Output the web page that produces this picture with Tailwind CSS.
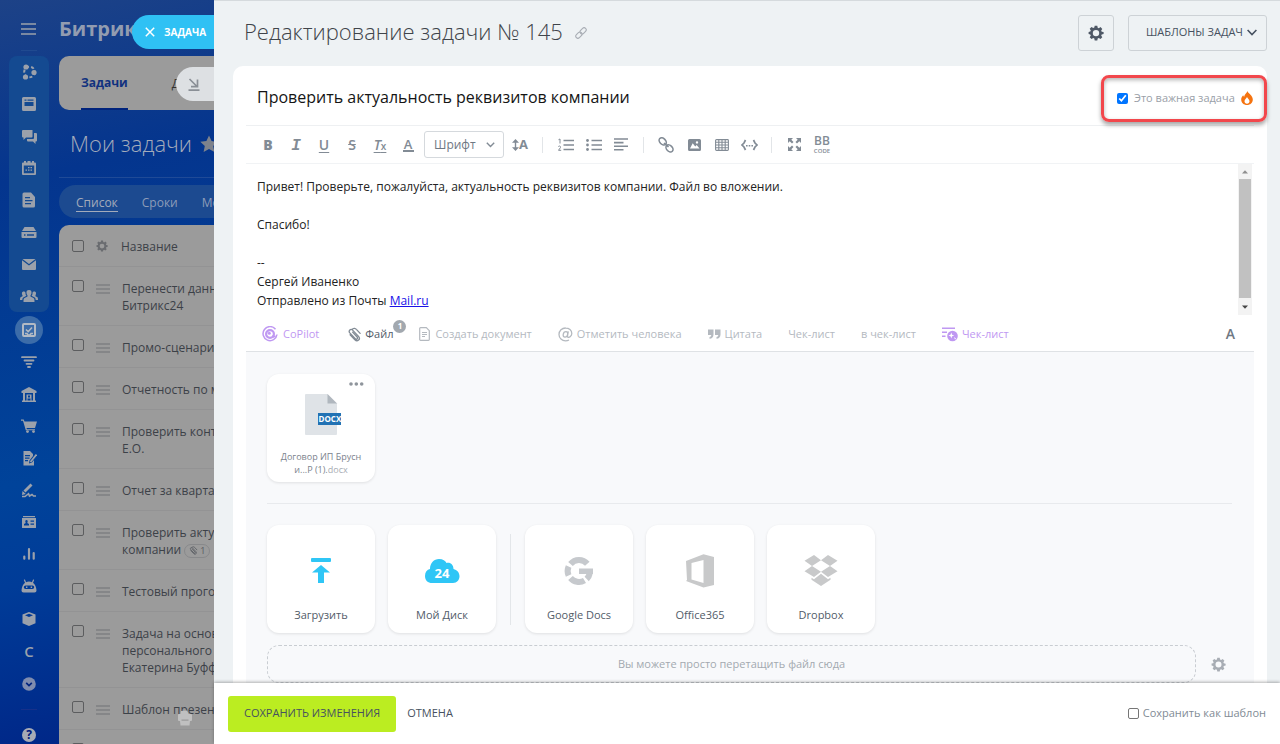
<!DOCTYPE html>
<html lang="ru">
<head>
<meta charset="utf-8">
<meta name="viewport" content="width=device-width, initial-scale=1">
<title>Редактирование задачи № 145</title>
<script src="https://cdn.jsdelivr.net/npm/@tailwindcss/browser@4"></script>
</head>
<body class="font-['Open_Sans','Noto_Sans',sans-serif] text-[#525c69]">
<svg class="hidden" aria-hidden="true">
  <symbol id="gear" viewBox="0 0 16 16"><path fill-rule="evenodd" fill="currentColor" d="M6.700 0.800h2.600l.4 1.900 1.100.5 1.700-1.100 1.800 1.800-1.100 1.700.5 1.100 1.900.4v2l-1.900.4-.5 1.100 1.100 1.700-1.800 1.800-1.700-1.100-1.100.5-.4 1.900H6.700l-.4-1.900-1.100-.5-1.700 1.100-1.800-1.800 1.100-1.700-.5-1.100L.6 9V7l1.700-.4.5-1.100-1.100-1.700 1.800-1.800 1.700 1.100 1.100-.5zM8 4.900a3.200 3.200 0 1 0 0 6.400a3.200 3.200 0 1 0 0-6.400z"/></symbol>
  <symbol id="grip" viewBox="0 0 14 10"><path stroke="#7f8083" stroke-width="1.300" d="M0 1h14M0 5h14M0 9h14"/></symbol>
  <symbol id="clip" viewBox="0 0 16 16"><path fill="none" stroke="currentColor" stroke-width="1.400" stroke-linecap="round" d="M6 5.500l4.800 5.200c1.300 1.500-.7 3.200-2 1.800L3 6.300C1.200 4.200 3.800 1.300 6 3.300l6.300 6.700c2.600 3-1.200 6.300-3.900 3.600L3.300 8.200M5.200 2.700C7 .4 9.200 1.600 10 2.500l4 4.300"/></symbol>
</svg>
<div class="flex h-screen overflow-hidden bg-[linear-gradient(168deg,#1d4287_0%,#04358e_18%,#00439a_48%,#003c98_58%,#001177_92%)]">

  <nav class="flex w-[59px] shrink-0 flex-col items-center pr-px text-[#9ba1ab]" aria-label="Главное меню">
    <button class="flex h-[50px] w-full shrink-0 items-center justify-center pt-2" aria-label="Меню"><svg class="h-3 w-4" viewBox="0 0 16 12"><path stroke="currentColor" stroke-width="1.300" d="M0 1h15M0 6h15M0 11h15"/></svg></button>
    <div class="mb-[5px] h-px w-4 shrink-0 bg-[#204a90]"></div>
    <div class="flex w-10 shrink-0 flex-col rounded-lg bg-[#144a91]">
      <a href="#" class="flex h-8 items-center justify-center" aria-label="Совместная работа"><svg class="h-4 w-4" viewBox="0 0 16 16"><circle cx="8.500" cy="8" r="5.300" fill="none" stroke="currentColor" stroke-width="2" stroke-dasharray="3 2.200"/><circle cx="5" cy="3" r="2.600" fill="currentColor"/><circle cx="13" cy="8.500" r="2.600" fill="currentColor"/><circle cx="4.500" cy="13" r="2.600" fill="currentColor"/></svg></a>
      <a href="#" class="flex h-8 items-center justify-center" aria-label="Лента"><svg class="h-[14px] w-[14px]" viewBox="0 0 14 14"><path fill="currentColor" fill-rule="evenodd" d="M1.500 0h11A1.500 1.500 0 0 1 14 1.500v11a1.500 1.500 0 0 1-1.500 1.500h-11A1.500 1.500 0 0 1 0 12.500v-11A1.500 1.500 0 0 1 1.500 0zM2.500 2.500v1.200h2V2.500zM5.500 2.500v1.200h6V2.500zM2.500 5v4h9V5z"/></svg></a>
      <a href="#" class="flex h-8 items-center justify-center" aria-label="Чаты"><svg class="h-[15px] w-[15px]" viewBox="0 0 15 15"><path fill="currentColor" d="M1 1h9.500v6.500a1 1 0 0 1-1 1H4L1.500 11V8.500H1a1 1 0 0 1-1-1V2a1 1 0 0 1 1-1zM12 4h2a1 1 0 0 1 1 1v6.500a1 1 0 0 1-1 1h-.5V15L11 12.500H6a1 1 0 0 1-1-1V10h6a1 1 0 0 0 1-1z"/></svg></a>
      <a href="#" class="flex h-8 items-center justify-center" aria-label="Календарь"><svg class="h-4 w-4" viewBox="0 0 16 16"><path fill="currentColor" fill-rule="evenodd" d="M3 1h2v1.500h1.500V1h3v1.500H11V1h2v1.500h1a1 1 0 0 1 1 1V14a1 1 0 0 1-1 1H2a1 1 0 0 1-1-1V3.500a1 1 0 0 1 1-1h1zM2.800 5.500v7.700h10.400V5.500zM7 7h1.500v1.300H7zM9.500 7H11v1.300H9.500zM4.500 9.500H6v1.300H4.500zM7 9.500h1.500v1.300H7zM9.500 9.500H11v1.300H9.500z"/></svg></a>
      <a href="#" class="flex h-8 items-center justify-center" aria-label="Документы"><svg class="h-4 w-[14px]" viewBox="0 0 14 16"><path fill="currentColor" fill-rule="evenodd" d="M2 .5h7L13 5v9a1.500 1.500 0 0 1-1.500 1.500H2A1.500 1.500 0 0 1 .5 14V2A1.500 1.500 0 0 1 2 .5zM3 5v1.300h5V5zM3 8v1.300h7.500V8zM3 11v1.300h6V11z"/></svg></a>
      <a href="#" class="flex h-8 items-center justify-center" aria-label="Диск"><svg class="h-[11px] w-4" viewBox="0 0 16 11"><path fill="currentColor" fill-rule="evenodd" d="M3.500 0h9l2.500 4H1zM.5 5h15v5a1 1 0 0 1-1 1h-13a1 1 0 0 1-1-1zM3 7.300v1.400h1.500V7.300zM6 7.300v1.400h7V7.300z"/></svg></a>
      <a href="#" class="flex h-8 items-center justify-center" aria-label="Почта"><svg class="h-[11px] w-[14px]" viewBox="0 0 14 11"><path fill="currentColor" d="M.5 0h13L7 5zM0 1.200l7 5.300 7-5.300V10a1 1 0 0 1-1 1H1a1 1 0 0 1-1-1z"/></svg></a>
      <a href="#" class="flex h-8 items-center justify-center" aria-label="Группы"><svg class="h-3 w-[18px]" viewBox="0 0 18 12"><path fill="currentColor" d="M9 0c2 0 2.700 1.300 2.500 3-.1 1.300-.7 2-1 2.600v1l3 1.400c.8.400 1 1.200 1 4h-11c0-2.800.2-3.600 1-4l3-1.400v-1c-.3-.6-.9-1.300-1-2.600C6.300 1.300 7 0 9 0zM3.800 1.500c1 0 1.600.5 1.700 1.500 0 1.500.3 2 1 2.800L3.300 7.500C2.500 8 2.400 9 2.300 10H0c0-2 .2-2.600 1-3l1.500-.8v-1C1.700 4 1.500 1.500 3.800 1.500zM14.200 1.500c-1 0-1.600.5-1.700 1.500 0 1.500-.3 2-1 2.800l3.200 1.700c.8.500.9 1.500 1 2.500H18c0-2-.2-2.600-1-3l-1.500-.8v-1C16.300 4 16.500 1.500 14.200 1.500z"/></svg></a>
    </div>
    <a href="#" class="mt-1 flex h-7 w-7 shrink-0 items-center justify-center rounded-full bg-[#3c6ca9] text-[#b3bac4]" aria-label="Задачи"><svg class="h-[14px] w-[14px]" viewBox="0 0 14 14"><rect x="1" y="1" width="12" height="12" rx="1" fill="none" stroke="currentColor" stroke-width="2"/><path d="M4 6.500l2.200 2.200L10 4.500M3 10.500h2l1 1.500h2l1-1.500h2" fill="none" stroke="currentColor" stroke-width="1.600"/></svg></a>
    <a href="#" class="mt-[2px] flex h-8 w-8 shrink-0 items-center justify-center" aria-label="CRM"><svg class="h-3 w-4" viewBox="0 0 16 12"><path stroke="currentColor" stroke-width="1.800" d="M1 1.200h14M3.500 4.500h9M5.500 7.800h5M7 11h2" stroke-linecap="round"/></svg></a>
    <a href="#" class="flex h-8 w-8 shrink-0 items-center justify-center" aria-label="Компания"><svg class="h-[15px] w-4" viewBox="0 0 16 15"><path fill="currentColor" fill-rule="evenodd" d="M8 0l7.500 4v2H14v7.500h1V15H1v-1.500h1V6H.5V4zM4 6v7.500h1.500V7.500h5v6H12V6zM7 8.500v2h2v-2zM6.500 11.500v2h3v-2z"/></svg></a>
    <a href="#" class="flex h-8 w-8 shrink-0 items-center justify-center" aria-label="Магазин"><svg class="h-[14px] w-4" viewBox="0 0 16 14"><path fill="currentColor" d="M0 .5h2.700l.8 2H16L14 9H5.500l.4 1.200H14v1H4.800L2 1.700H0z"/><circle cx="6.500" cy="12.600" r="1.400" fill="currentColor"/><circle cx="12.500" cy="12.600" r="1.400" fill="currentColor"/></svg></a>
    <a href="#" class="flex h-8 w-8 shrink-0 items-center justify-center" aria-label="Отчёты"><svg class="h-[15px] w-[15px]" viewBox="0 0 15 15"><path fill="currentColor" fill-rule="evenodd" d="M1.500 0H8l3 3v2L7.500 9.500 7 12.500 10 11.500 12 9v5.500H1.500zM3 4v1.200h5V4zM3 6.500v1.200h4.500V6.500zM3 9v1.200h3V9z"/><path stroke="currentColor" stroke-width="1.800" d="M14.500 3.500L8.500 11"/></svg></a>
    <a href="#" class="flex h-8 w-8 shrink-0 items-center justify-center" aria-label="Подпись"><svg class="h-[15px] w-4" viewBox="0 0 16 15"><path stroke="currentColor" stroke-width="2.800" d="M10.500 1.500L3.500 8.500"/><path fill="currentColor" d="M1.500 8L4.800 11 1 12z"/><path fill="none" stroke="currentColor" stroke-width="1.600" d="M1 13.500h3l3.500-2.800 1 2.300 2.500-1.500 1.500 1.500H15"/></svg></a>
    <a href="#" class="flex h-8 w-8 shrink-0 items-center justify-center" aria-label="Контакты"><svg class="h-3 w-4" viewBox="0 0 16 12"><path fill="currentColor" fill-rule="evenodd" d="M2 0h12v1.200H2zM1 2h14v9.500a.5.5 0 0 1-.5.5h-13a.5.5 0 0 1-.5-.5zM5.500 4C4 4 4 6 4.800 7L3 8v1.500h5V8L6.200 7C7 6 7 4 5.500 4zM9.500 4.500v1.300H13V4.500zM9.500 7.500v1.300H13V7.500z"/></svg></a>
    <a href="#" class="flex h-8 w-8 shrink-0 items-center justify-center" aria-label="Аналитика"><svg class="h-3 w-3" viewBox="0 0 12 12"><path stroke="currentColor" stroke-width="2.200" stroke-linecap="round" d="M1.300 10.700V8.500M6 10.700V1.200M10.700 10.700V5"/></svg></a>
    <a href="#" class="flex h-8 w-8 shrink-0 items-center justify-center" aria-label="Роботы"><svg class="h-[14px] w-4" viewBox="0 0 16 14"><path stroke="currentColor" stroke-width="1.200" stroke-linecap="round" d="M3.500 1l1 2.500M12.500 1l-1 2.500"/><path fill="currentColor" fill-rule="evenodd" d="M8 2.500c4.500 0 7 3.500 7.500 9a2 2 0 0 1-2 2h-11a2 2 0 0 1-2-2C1 6 3.500 2.500 8 2.500zM4.500 6.500a1.700 1.700 0 0 0 0 3.400h7a1.700 1.700 0 0 0 0-3.400z"/><path stroke="currentColor" stroke-width="1.400" d="M5 8.200h1.400M9.700 8.200h1.400"/></svg></a>
    <a href="#" class="mt-px flex h-8 w-8 shrink-0 items-center justify-center" aria-label="Маркет"><svg class="h-[14px] w-[14px]" viewBox="0 0 14 14"><path fill="currentColor" fill-rule="evenodd" d="M7 0l6.500 2.500v8.700L7 14 .5 11.200V2.500zM7 1.800L3 3.300l4 1.600 4-1.600z"/></svg></a>
    <a href="#" class="flex h-8 w-8 shrink-0 items-center justify-center text-[15px] font-semibold" aria-label="С">С</a>
    <button class="mt-px flex h-8 w-8 shrink-0 items-center justify-center text-[#7f8cae]" aria-label="Ещё"><svg class="h-[14px] w-[14px]" viewBox="0 0 14 14"><circle cx="7" cy="7" r="6.800" fill="currentColor"/><path d="M4.200 5.800L7 8.500l2.800-2.700" fill="none" stroke="#00237f" stroke-width="1.700"/></svg></button>
    <div class="mt-[9px] h-px w-4 shrink-0 bg-[#16308a]"></div>
    <button class="mt-[9px] flex h-8 w-8 shrink-0 items-center justify-center" aria-label="Помощь"><span class="flex h-[14px] w-[14px] items-center justify-center rounded-full bg-[#a7abb5] text-xs leading-none font-bold text-[#00187a]">?</span></button>
  </nav>

  <section class="relative w-[155px] shrink-0 overflow-hidden whitespace-nowrap" aria-label="Мои задачи">
    <div class="flex h-14 items-center pt-0.5 text-xl font-bold text-[#929cb0]">Битрикс24</div>
    <div class="flex h-[54px] w-[400px] gap-[44px] rounded-l-[10px] bg-[#9b9b9b] pl-[22px] text-xs">
      <a href="#" class="flex items-center border-b-2 border-[#00237c] pt-0.5 font-bold text-[#11317f]">Задачи</a>
      <a href="#" class="flex items-center pt-0.5 text-[#333]">Документы</a>
    </div>
    <div class="flex h-[68px] w-[300px] items-center gap-2 border-b border-[#1f4a97] pl-[11px]">
      <h2 class="text-[22px] font-light text-[#a3abbb]">Мои задачи</h2>
      <svg class="h-[18px] w-[18px] text-[#7d828c]" viewBox="0 0 18 18"><path fill="currentColor" d="M9 .5l2.600 5.600 6.100.7-4.500 4.200 1.200 6L9 14l-5.400 3 1.200-6L.3 6.800l6.100-.7z"/></svg>
    </div>
    <div class="mt-[7px] flex h-[33px] w-[300px] items-center gap-6 rounded-l-full bg-[#1c4a90] pt-0.5 pl-[17px] text-xs text-[#8d9cb8]">
      <a href="#" class="border-b border-[#a3abbb] pt-px font-medium text-[#a3abbb]">Список</a>
      <a href="#">Сроки</a>
      <a href="#">Мой план</a>
    </div>
    <table class="mt-[7px] block w-[340px] rounded-tl-[10px] bg-[#9b9b9b] text-xs leading-[17px] text-[#3c4148]">
      <tbody id="tasks" class="block">
        <tr class="flex h-[42px] items-center border-b border-[#939394] pt-px">
          <th class="flex w-[62px] items-center gap-3 pl-[13px]"><input type="checkbox" aria-label="Выбрать все" class="h-3 w-3 appearance-none rounded-[2px] border border-[#5c5d5f]"><svg class="h-3 w-3 text-[#6a6c70]"><use href="#gear"/></svg></th>
          <th class="font-normal">Название</th>
        </tr>
      </tbody>
    </table>
    <svg class="absolute top-[710px] left-[118px] h-4 w-4 text-[#c0c0c0]" viewBox="0 0 16 16"><path fill="currentColor" fill-rule="evenodd" d="M4 1l6-.500L11.500 4h2.500a1 1 0 0 1 1 1v5a1 1 0 0 1-1 1h-1l-.5 4.500h-9L3 11H2a1 1 0 0 1-1-1V5a1 1 0 0 1 1-1h1.500zM4.500 9.500v1.300h7V9.500z"/></svg>
    <button class="absolute top-[15px] right-0 flex h-[34px] w-[82px] items-center gap-[9px] rounded-l-full bg-[#2fc1f4] pl-[13px] text-[10px] font-bold text-white"><svg class="h-[10px] w-[10px]" viewBox="0 0 10 10"><path stroke="currentColor" stroke-width="1.500" d="M.8.8l8.400 8.400M9.200.8L.8 9.200"/></svg>ЗАДАЧА</button>
    <button class="absolute top-[67px] right-0 flex h-[34px] w-[38px] items-center rounded-l-full bg-[#dde0e3] pl-3 text-[#8a8f96]" aria-label="Свернуть"><svg class="h-[13px] w-3" viewBox="0 0 12 13"><path fill="none" stroke="currentColor" stroke-width="1.700" d="M1.500 1l7.500 7.500M9.500 1.500v7.200H3M.5 12.200h11"/></svg></button>
  </section>

  <main class="z-10 flex min-w-0 flex-1 flex-col border-t border-[#d5dadd] bg-[#eef2f4]">
    <header class="flex h-[65px] shrink-0 items-center pr-[13px] pb-0.5 pl-[30px]">
      <h1 class="pb-0.5 text-[22px] font-light text-[#3f444a]">Редактирование задачи № 145</h1>
      <a href="#" class="ml-3 text-[#a8adb4]" aria-label="Скопировать ссылку"><svg class="h-3 w-3" viewBox="0 0 12 12"><g fill="none" stroke="currentColor" stroke-width="1.100"><rect x="4.600" y="1.700" width="7" height="4.200" rx="2.100" transform="rotate(-45 8.100 3.800)"/><rect x=".4" y="6.100" width="7" height="4.200" rx="2.100" transform="rotate(-45 3.900 8.200)"/></g></svg></a>
      <button class="mr-[14px] ml-auto flex h-9 w-9 items-center justify-center rounded-[3px] border border-[#cdd2d6] text-[#4e5866]" aria-label="Настройки"><svg class="h-4 w-4"><use href="#gear"/></svg></button>
      <button class="flex h-9 items-center gap-1 rounded-[3px] border border-[#cdd2d6] pr-[9px] pl-[17px] text-[11px] font-medium text-[#465160]">ШАБЛОНЫ ЗАДАЧ<svg class="h-[7px] w-[10px]" viewBox="0 0 10 7"><path fill="none" stroke="currentColor" stroke-width="1.600" d="M.6 1L5 5.500 9.400 1"/></svg></button>
    </header>

    <div class="mr-[13px] ml-[19px] flex min-h-0 flex-1 flex-col overflow-hidden rounded-t-[10px] bg-white px-[13px]">
      <div class="flex h-[60px] shrink-0 items-center border-b border-[#eef0f2] pt-0.5 pr-[13px] pl-[11px]">
        <input type="text" aria-label="Название задачи" value="Проверить актуальность реквизитов компании" class="min-w-0 flex-1 text-base text-[#151515] outline-none">
      </div>
      <div class="flex h-[38px] shrink-0 items-center border-b border-[#f1f3f5] pl-2 text-[#828b95]" role="toolbar" aria-label="Форматирование">
        <button class="w-7 text-sm font-extrabold">B</button>
        <button class="w-7 pt-0.5 font-['Liberation_Mono',monospace] text-base font-bold italic">I</button>
        <button class="w-7 text-sm font-semibold underline underline-offset-2">U</button>
        <button class="w-7 text-sm font-semibold line-through">S</button>
        <button class="w-7 text-sm font-semibold italic underline underline-offset-2">T<span class="text-[10px] not-italic">x</span></button>
        <button class="flex w-7 justify-center" aria-label="Цвет текста"><span class="h-[15px] w-[11px] border-b-2 text-[13px] leading-[14px] font-semibold">A</span></button>
        <div class="relative ml-0.5 shrink-0">
          <select aria-label="Шрифт" class="h-[27px] w-20 appearance-none rounded-[3px] border border-[#d5d9dd] pl-[9px] text-xs text-[#6f7883]"><option>Шрифт</option></select>
          <svg class="pointer-events-none absolute top-[11px] right-[9px] h-[6px] w-[9px]" viewBox="0 0 9 6"><path fill="none" stroke="currentColor" stroke-width="1.400" d="M.8.8l3.700 3.700L8.200.8"/></svg>
        </div>
        <button class="flex w-8 items-center justify-center text-[13px] font-bold" aria-label="Размер шрифта"><svg class="h-3 w-[7px]" viewBox="0 0 7 12"><path fill="currentColor" d="M3.500 0L7 3.800H4.200v4.400H7L3.500 12 0 8.200h2.800V3.800H0z"/></svg>A</button>
        <div class="mr-[9px] ml-[6px] h-4 w-px bg-[#e2e5e8]"></div>
        <button class="flex w-7 justify-center" aria-label="Нумерованный список"><svg class="h-[14px] w-4" viewBox="0 0 16 14"><path stroke="currentColor" stroke-width="1.700" d="M5.500 2.500H16M5.500 7H16M5.500 11.500H16"/><path fill="none" stroke="currentColor" d="M.5 1.700l1.500-.7v4.500M.3 8.600c1-1.200 2.800-.3 2.200.9L.5 12.300h2.700"/></svg></button>
        <button class="flex w-[27px] justify-center" aria-label="Список"><svg class="h-3 w-4" viewBox="0 0 16 12"><path stroke="currentColor" stroke-width="1.700" d="M5.500 1.500H16M5.500 6H16M5.500 10.500H16"/><g fill="currentColor"><circle cx="1.500" cy="1.500" r="1.400"/><circle cx="1.500" cy="6" r="1.400"/><circle cx="1.500" cy="10.500" r="1.400"/></g></svg></button>
        <button class="flex w-7 justify-center" aria-label="Выравнивание"><svg class="h-[13px] w-[14px]" viewBox="0 0 14 13"><path stroke="currentColor" stroke-width="1.600" d="M0 1h14M0 4.600h9.500M0 8.200h14M0 11.800h9.500"/></svg></button>
        <div class="mr-2 ml-2 h-4 w-px bg-[#e2e5e8]"></div>
        <button class="flex w-7 justify-center" aria-label="Ссылка"><svg class="h-4 w-4" viewBox="0 0 16 16"><g fill="none" stroke="currentColor" stroke-width="1.600"><ellipse cx="4.700" cy="4.400" rx="4.100" ry="2.900" transform="rotate(45 4.700 4.400)"/><ellipse cx="11.500" cy="11.400" rx="4" ry="2.900" transform="rotate(45 11.500 11.400)"/><path d="M6 6l4.500 4"/></g></svg></button>
        <button class="flex w-7 justify-center" aria-label="Изображение"><svg class="h-3 w-[13px]" viewBox="0 0 13 12"><path fill="currentColor" fill-rule="evenodd" d="M1.500 0h10A1.500 1.500 0 0 1 13 1.500v9a1.500 1.500 0 0 1-1.500 1.500h-10A1.500 1.500 0 0 1 0 10.500v-9A1.500 1.500 0 0 1 1.500 0zM2 9.500h9.500L8.700 6 7.200 7.500 4.700 4.300zM9 2.200a1.200 1.200 0 1 0 0 2.400a1.200 1.200 0 1 0 0-2.400z"/></svg></button>
        <button class="flex w-[27px] justify-center" aria-label="Таблица"><svg class="h-3 w-[14px]" viewBox="0 0 14 12"><path fill="none" stroke="currentColor" stroke-width="1.100" d="M1.500.6h11a.9.9 0 0 1 .9.9v9a.9.9 0 0 1-.9.9h-11a.9.9 0 0 1-.9-.9v-9a.9.9 0 0 1 .9-.9zM.6 3.300h12.800M.6 6h12.800M.6 8.700h12.800M3.800.6v10.800M7 .6v10.800M10.200.6v10.800"/></svg></button>
        <button class="flex w-7 justify-center" aria-label="Код"><svg class="h-3 w-[17px]" viewBox="0 0 17 12"><path fill="none" stroke="currentColor" stroke-width="1.700" d="M4.500 1L3 4 1 6l2 2 1.500 3M12.500 1L14 4l2 2-2 2-1.500 3"/><path fill="currentColor" d="M5 6h1.600v1.600H5zM7.700 6h1.600v1.600H7.700zM10.400 6H12v1.600h-1.600z"/></svg></button>
        <div class="mr-2 ml-2 h-4 w-px bg-[#e2e5e8]"></div>
        <button class="flex w-7 justify-center" aria-label="На весь экран"><svg class="h-[13px] w-[13px]" viewBox="0 0 13 13"><path fill="currentColor" d="M0 0h5L3.300 1.700 5.500 4 4 5.500 1.700 3.300 0 5zM13 0v5l-1.700-1.700L9 5.500 7.500 4l2.200-2.300L8 0zM0 13V8l1.700 1.700L4 7.500 5.500 9l-2.200 2.300L5 13zM13 13H8l1.700-1.700L7.500 9 9 7.500l2.300 2.200L13 8z"/></svg></button>
        <button class="flex w-7 flex-col items-center" aria-label="BB code"><span class="text-xs leading-3 font-semibold">BB</span><span class="text-[6px] leading-[8px] font-semibold">CODE</span></button>
      </div>
      <div class="flex h-[151px] shrink-0 pl-[11px]">
        <div contenteditable="true" role="textbox" aria-label="Описание" class="min-w-0 flex-1 overflow-hidden pt-[13px] text-xs leading-[19px] text-[#222] outline-none">
          <p>Привет! Проверьте, пожалуйста, актуальность реквизитов компании. Файл во вложении.</p><p><br></p><p>Спасибо!</p><p><br></p><p>--</p><p>Сергей Иваненко</p><p>Отправлено из Почты <a href="#" class="text-[#1a12e8] underline">Mail.ru</a></p>
        </div>
        <div class="mr-[2px] flex w-[14px] flex-col bg-[#f3f3f3]" aria-hidden="true">
          <svg class="h-[15px] w-[14px]" viewBox="0 0 14 15"><path fill="#8e8e8e" d="M4 9.500L7 6.200l3 3.300z"/></svg>
          <div class="mx-px flex-1 bg-[#c1c1c1]"></div>
          <svg class="h-[17px] w-[14px]" viewBox="0 0 14 17"><path fill="#444" d="M4 7.500L7 10.800l3-3.300z"/></svg>
        </div>
      </div>
      <div class="flex h-[37px] shrink-0 items-center gap-[26px] border-b border-[#dfe2e5] pt-0.5 pr-[19px] pl-4 text-[11px] whitespace-nowrap text-[#b4b9bf]">
        <button class="mr-0.5 flex items-center gap-[5px] text-[#bf98f2]"><svg class="h-4 w-4" viewBox="0 0 16 16"><g fill="none" stroke="currentColor" stroke-width="1.500"><path d="M13.500 3.200A7 7 0 1 0 15 8.500"/><circle cx="8" cy="8" r="3.900" stroke-width="2.200"/></g><circle cx="7.300" cy="7.300" r="1.500" fill="currentColor"/><path fill="currentColor" d="M10 9l4.500 1-3 2z"/></svg>CoPilot</button>
        <button class="relative flex items-center gap-[3px] text-[#525c69]"><svg class="h-[15px] w-[15px] text-[#828b95]"><use href="#clip"/></svg>Файл<span class="absolute -top-[6px] -right-[13px] flex h-[13px] w-[13px] items-center justify-center rounded-full bg-[#a2a8af] text-[8px] font-bold text-white">1</span></button>
        <button class="flex items-center gap-[5px]"><svg class="h-[14px] w-[11px]" viewBox="0 0 11 14"><path fill="none" stroke="currentColor" stroke-width="1.200" d="M1.500.7h5.800l3 3v8.800a.8.8 0 0 1-.8.800h-8a.8.8 0 0 1-.8-.800v-11a.8.8 0 0 1 .8-.8zM3 5.500h5M3 7.500h5M3 9.500h3"/></svg>Создать документ</button>
        <button class="flex items-center gap-1"><svg class="h-[15px] w-[15px]" viewBox="0 0 15 15"><path fill="none" stroke="currentColor" stroke-width="1.300" d="M10.300 4.300l-.8 4.700c-.2 1.700 1.500 1.800 2.600.8C13 9 13.800 7.800 13.800 6.500 13.800 3.300 11 1 7.700 1A6.500 6.500 0 0 0 1 7.500C1 11.300 4 13.800 7.500 13.800c1.500 0 2.600-.3 3.500-.8M9.600 7.500c-.2 1.500-1.300 2.700-2.600 2.700C5.500 10.200 5 9 5.200 7.500 5.400 6 6.500 4.700 8 4.700c1.200 0 2 1 1.600 2.800z"/></svg>Отметить человека</button>
        <button class="flex items-center gap-1"><svg class="h-[10px] w-[13px]" viewBox="0 0 13 10"><path fill="currentColor" d="M0 .5h5.500v5C5.500 8 4 9.800 1.500 9.800V8c1 0 1.700-.8 1.800-2H0zM7 .5h5.500v5c0 2.500-1.500 4.300-4 4.300V8c1 0 1.700-.8 1.800-2H7z"/></svg>Цитата</button>
        <button>Чек-лист</button>
        <button>в чек-лист</button>
        <button class="flex items-center gap-1 text-[#bf98f2]"><svg class="h-[15px] w-4" viewBox="0 0 16 15"><path stroke="currentColor" stroke-width="1.500" d="M0 1.200h13M0 5.200h5M0 9.300h3.500"/><circle cx="10.500" cy="9" r="5.300" fill="currentColor"/><path fill="#fff" d="M9.300 5.500l.8 2.200 2.200.8-2.200.8-.8 2.200-.8-2.200-2.200-.8 2.200-.8zM12 10l2 1.500-1 1z"/></svg>Чек-лист</button>
        <button class="ml-auto text-sm font-semibold text-[#6f7883]">A</button>
      </div>
      <div class="flex-1 bg-[#f8f9fb] pr-[22px] pl-[21px]">
        <div class="flex h-[152px] items-start border-b border-[#e8eaed] pt-[22px]">
          <article class="relative flex h-[108px] w-[108px] flex-col items-center rounded-xl bg-white pt-[20px] text-center text-[9px] leading-[13px] text-[#7b838d] shadow-[0_1px_3px_rgba(0,0,0,0.1)]">
            <button class="absolute top-[8px] right-[11px] flex h-1" aria-label="Действия"><svg class="h-1 w-[15px]" viewBox="0 0 15 4"><g fill="#8f959c"><circle cx="2" cy="2" r="1.800"/><circle cx="7.300" cy="2" r="1.800"/><circle cx="12.700" cy="2" r="1.800"/></g></svg></button>
            <svg class="ml-[4px] h-[41px] w-[36px] shrink-0" viewBox="0 0 36 41"><path fill="#dfe3e7" d="M1 0h21.500L32 9.500V40a1 1 0 0 1-1 1H1a1 1 0 0 1-1-1V1a1 1 0 0 1 1-1z"/><path fill="#b0b7be" d="M22.500 0L32 9.500h-9.500z"/><path fill="#2272b4" d="M13 19h23v12H13z"/><text x="13.500" y="28.300" font-size="8" font-weight="700" fill="#fff">DOCX</text></svg>
            <p class="mt-[15px]">Договор ИП Брусн<br>и...Р (1).<span class="text-[#a8adb4]">docx</span></p>
          </article>
        </div>
        <div class="flex items-center gap-[13px] pt-[21px] text-[11px] text-[#525c69]">
          <button class="flex h-[108px] w-[108px] flex-col items-center justify-between rounded-xl bg-white pt-[27px] pb-[10px] shadow-[0_1px_3px_rgba(0,0,0,0.1)]"><svg class="h-[38px] w-[38px]" viewBox="0 0 38 38"><path fill="#2fc6f6" d="M10 6h18a1 1 0 0 1 1 1v2a1 1 0 0 1-1 1H10a1 1 0 0 1-1-1V7a1 1 0 0 1 1-1zM19 13l9 7.500h-6V31h-6V20.500h-6z"/></svg>Загрузить</button>
          <button class="flex h-[108px] w-[108px] flex-col items-center justify-between rounded-xl bg-white pt-[27px] pb-[10px] shadow-[0_1px_3px_rgba(0,0,0,0.1)]"><svg class="h-[38px] w-[38px]" viewBox="0 0 38 38"><path fill="#2fc6f6" d="M9 31c-4 0-7-2.500-7-7 0-4 2-6.300 5-7 0-6 4-10 9-10 4 0 6.500 2 7.500 4 4-1 7 2 7 6 3.500 1 6 3.500 6 7.300C36.500 28 34 31 30 31z"/><text x="19" y="26" text-anchor="middle" font-size="13" font-weight="700" fill="#fff">24</text></svg>Мой Диск</button>
          <div class="mx-px h-[91px] w-px bg-[#e3e6e9]"></div>
          <button class="flex h-[108px] w-[108px] flex-col items-center justify-between rounded-xl bg-white pt-[27px] pb-[10px] shadow-[0_1px_3px_rgba(0,0,0,0.1)]"><svg class="h-[38px] w-[38px]" viewBox="0 0 38 38"><g fill="none" stroke="#c6c9cd" stroke-width="6"><path d="M27.300 11.800A11 11 0 0 0 10.500 12M8.600 14.500A11 11 0 0 0 8.600 23.500M10.500 26A11 11 0 0 0 24.500 28.500M26.700 27A11 11 0 0 0 29.700 21.500"/></g><path fill="#c6c9cd" d="M19 16.500h14v5.500H19z"/></svg>Google Docs</button>
          <button class="flex h-[108px] w-[108px] flex-col items-center justify-between rounded-xl bg-white pt-[27px] pb-[10px] shadow-[0_1px_3px_rgba(0,0,0,0.1)]"><svg class="h-[38px] w-[38px]" viewBox="0 0 38 38"><path fill="#c8c9ca" fill-rule="evenodd" d="M5 9l17.500-6.700L33 5v28l-10.500 2.500L5 29l1-1zM10.500 11v16.500L22.500 31V8z"/></svg>Office365</button>
          <button class="flex h-[108px] w-[108px] flex-col items-center justify-between rounded-xl bg-white pt-[27px] pb-[10px] shadow-[0_1px_3px_rgba(0,0,0,0.1)]"><svg class="h-[38px] w-[38px]" viewBox="0 0 38 38"><path fill="#c8c9ca" d="M12 3l7 5.300-9 5.700L2.500 8.800zM26 3l9.500 5.800L28 14l-9-5.700zM10 14l9 5.700-7 5.300-9.500-5.800zM28 14l7.500 5.200L26 25l-7-5.300zM9.500 25.700L12 27.300l7-5.500 7 5.500 2.500-1.600v2L19 34l-9.500-6.300z"/></svg>Dropbox</button>
        </div>
        <div class="mt-3 flex items-center gap-[15px] pr-[6px]">
          <div class="flex h-[38px] flex-1 items-center justify-center rounded-xl border border-dashed border-[#c9cdd2] text-[11px] text-[#a3a9b0]">Вы можете просто перетащить файл сюда</div>
          <button class="text-[#a8adb4]" aria-label="Настройки загрузки"><svg class="h-[15px] w-[15px]"><use href="#gear"/></svg></button>
        </div>
      </div>
    </div>

    <label class="absolute top-[75px] right-[13px] flex h-[47px] w-[166px] items-center gap-[6px] rounded-lg border-3 border-[#f2474c] pb-px pl-[13px] text-[11px] whitespace-nowrap text-[#9aa0a8] shadow-[0_3px_4px_rgba(0,0,0,0.35),inset_0_2px_4px_rgba(0,0,0,0.3)]">
      <input type="checkbox" checked class="h-[11px] w-[11px] accent-[#0075ff]">Это важная задача
      <svg class="h-[14px] w-3" viewBox="0 0 12 14"><path fill="#f5730f" fill-rule="evenodd" d="M6.500 0c.3 2.500 5.300 4 5.300 8.500 0 3.300-2.600 5.500-5.800 5.500S.2 11.800.2 8.500c0-1.800.8-3.200 2-4.300.2.800.5 1.300 1 1.600C3.500 3 5.700 2.300 6.500 0zM6 6C5.500 7.500 3.500 8.500 3.500 10.300 3.500 11.800 4.600 12.700 6 12.700s2.500-.9 2.500-2.400C8.500 8.500 6.500 7.500 6 6z"/></svg>
    </label>

    <footer class="z-10 flex h-[61px] shrink-0 items-center gap-[11px] bg-white pr-[14px] pl-[14px] shadow-[0_-1px_3px_rgba(0,0,0,0.3)]">
      <button class="h-9 rounded-[3px] bg-[#bbed21] px-4 text-[11px] font-medium text-[#475160]">СОХРАНИТЬ ИЗМЕНЕНИЯ</button>
      <button class="text-[11px] font-medium text-[#465160]">ОТМЕНА</button>
      <label class="ml-auto flex items-center gap-1 text-[11px] text-[#828b95]"><input type="checkbox" class="h-[11px] w-[11px] appearance-none rounded-[2px] border border-[#767676]">Сохранить как шаблон</label>
    </footer>
  </main>
</div>
<template id="row">
  <tr class="flex border-b border-[#939394] pt-[13px] pb-[11px]">
    <td class="flex w-[63px] shrink-0 items-start gap-3 pl-[13px]"><input type="checkbox" class="h-3 w-3 appearance-none rounded-[2px] border border-[#5c5d5f]" aria-label="Выбрать задачу"><svg class="mt-1 h-[10px] w-[14px]"><use href="#grip"/></svg></td>
    <td class="whitespace-pre"></td>
  </tr>
</template>
<script>
const tasks = [
  "Перенести данные\nБитрикс24", "Промо-сценарий", "Отчетность по месяцу", "Проверить контакты\nЕ.О.",
  "Отчет за квартал", "Проверить актуальность\nкомпании", "Тестовый прогон", "Задача на основании\nперсонального чата\nЕкатерина Буффало",
  "Шаблон презентации", "Отчет"
];
const row = document.getElementById("row"), body = document.getElementById("tasks");
tasks.forEach((text, i) => {
  const item = row.content.cloneNode(true), cell = item.querySelectorAll("td")[1];
  cell.textContent = text;
  if (i === 5) cell.insertAdjacentHTML("beforeend", ' <span class="inline-flex h-[14px] items-center gap-0.5 rounded-full border border-[#88898b] px-1 align-middle text-[9px] text-[#55595f]"><svg class="h-[9px] w-[9px]"><use href="#clip"/></svg>1</span>');
  body.append(item);
});
</script>
</body>
</html>
